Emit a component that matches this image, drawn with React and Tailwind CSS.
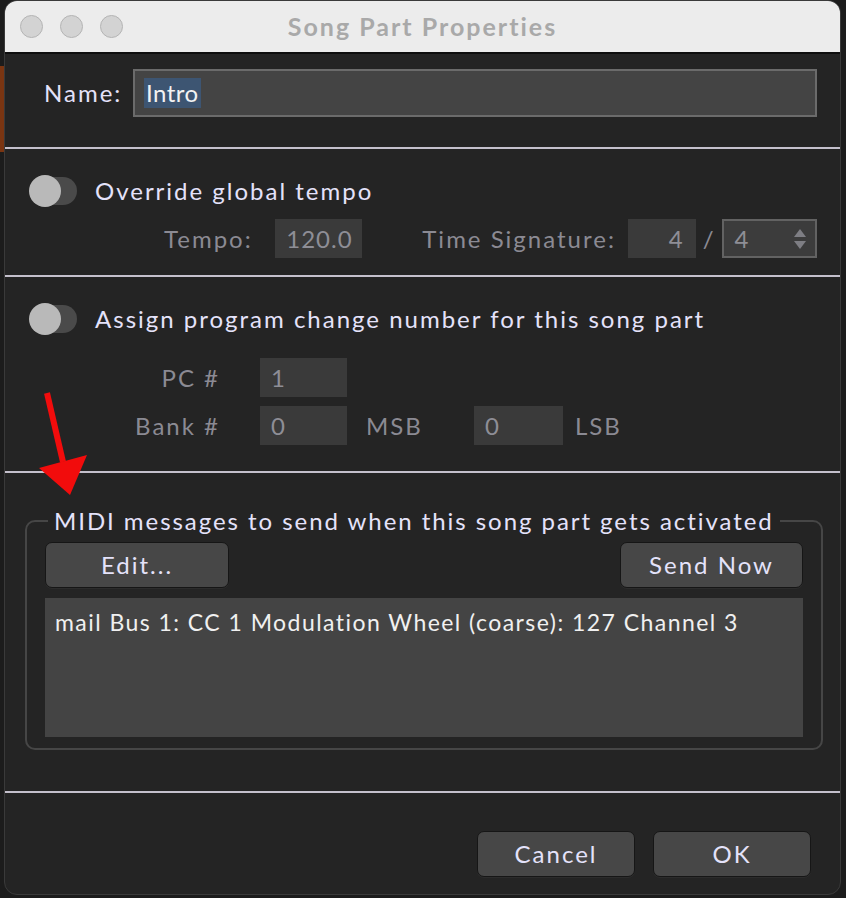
import React from 'react';

const font = { fontFamily: '"Lato", "Open Sans", sans-serif' };

function Toggle() {
  return (
    <div className="relative w-[48px] h-[32px] flex-shrink-0">
      <div className="absolute left-[8px] right-0 top-[2px] h-[28px] rounded-full bg-[#4a4a4a]" />
      <div className="absolute left-0 top-0 w-[32px] h-[32px] rounded-full bg-[#b9b9b9]" />
    </div>
  );
}

function Box({ children, className = '' }) {
  return (
    <div className={`h-[39px] bg-[#3a3a3a] text-[#8e8e96] flex items-center px-[11px] ${className}`}>
      {children}
    </div>
  );
}

function Btn({ children, className = '' }) {
  return (
    <div className={`h-[46px] rounded-[7px] bg-[#474747] border border-[#161616] shadow-[0_1px_0_#2c2c2c] flex items-center justify-center text-[#e4e2fa] text-[24px] tracking-[2px] ${className}`}>
      {children}
    </div>
  );
}

function Sep() {
  return <div className="h-[2px] bg-[#c4c0cc]" />;
}

export default function App() {
  return (
    <div className="w-[846px] h-[898px] bg-[#1c1c1c] relative overflow-hidden" style={font}>
      {/* stuff peeking behind the window */}
      <div className="absolute left-0 top-[66px] w-[5px] h-[86px] bg-[#7a3512]" />

      <div className="absolute left-[4px] top-0 w-[837px] h-[895px] rounded-[13px] overflow-hidden border border-[#3a3a3a] bg-[#242424] flex flex-col">
        {/* title bar */}
        <div className="h-[53px] bg-[#ececec] border-b-2 border-[#0e0e0e] relative flex items-center justify-center flex-shrink-0">
          <div className="absolute left-[15px] top-[14px] flex gap-[17px]">
            <div className="w-[23px] h-[23px] rounded-full bg-[#d3d3d3] border border-[#b4b4b4]" />
            <div className="w-[23px] h-[23px] rounded-full bg-[#d3d3d3] border border-[#b4b4b4]" />
            <div className="w-[23px] h-[23px] rounded-full bg-[#d3d3d3] border border-[#b4b4b4]" />
          </div>
          <span className="text-[25px] font-bold text-[#a9a9a9] tracking-[2px]">Song Part Properties</span>
        </div>

        {/* name */}
        <div className="flex items-center pl-[39px] pr-[23px] pt-[15px] pb-[30px] text-[24px] tracking-[2px]">
          <span className="text-[#e4e2fa] w-[89px]">Name:</span>
          <div className="flex-1 h-[48px] bg-[#444444] border-2 border-[#6b6b6b] flex items-center pl-[9px]">
            <span className="text-[#f2f2f2] bg-[#3d5572] px-[2px] leading-[30px] tracking-[0.5px]">Intro</span>
          </div>
        </div>
        <Sep />

        {/* tempo */}
        <div className="h-[126px] pl-[24px] pr-[23px] pt-[26px] text-[24px] tracking-[2px]">
          <div className="flex items-center gap-[18px]">
            <Toggle />
            <span className="text-[#e4e2fa] leading-[32px]">Override global tempo</span>
          </div>
          <div className="flex items-center mt-[12px]">
            <span className="text-[#8b8a93] ml-[135px] w-[112px]">Tempo:</span>
            <Box className="w-[87px] tracking-[1px]">120.0</Box>
            <span className="text-[#8b8a93] ml-[60px] w-[207px] tracking-[2px]">Time Signature:</span>
            <Box className="w-[68px] justify-end">4</Box>
            <span className="text-[#8b8a93] mx-[7px]">/</span>
            <div className="w-[95px] h-[39px] bg-[#3c3c3c] border-2 border-[#626262] text-[#8e8e96] flex items-center pl-[10px] pr-[8px] justify-between">
              <span>4</span>
              <svg width="14" height="24" viewBox="0 0 14 24">
                <path d="M7 2 L13 10 L1 10 Z" fill="#7e7e84" />
                <path d="M7 22 L13 14 L1 14 Z" fill="#7e7e84" />
              </svg>
            </div>
          </div>
        </div>
        <Sep />

        {/* program change */}
        <div className="h-[194px] pl-[24px] pr-[23px] pt-[26px] text-[24px] tracking-[2px]">
          <div className="flex items-center gap-[18px]">
            <Toggle />
            <span className="text-[#e4e2fa] leading-[32px]">Assign program change number for this song part</span>
          </div>
          <div className="grid grid-cols-[231px_87px_auto] mt-[23px] gap-y-[9px] items-center">
            <span className="text-[#8b8a93] text-right pr-[40px]">PC #</span>
            <Box>1</Box>
            <span />
            <span className="text-[#8b8a93] text-right pr-[40px]">Bank #</span>
            <Box>0</Box>
            <div className="flex items-center">
              <span className="text-[#8b8a93] ml-[19px] w-[108px]">MSB</span>
              <Box className="w-[89px]">0</Box>
              <span className="text-[#8b8a93] ml-[12px]">LSB</span>
            </div>
          </div>
        </div>
        <Sep />

        {/* midi messages */}
        <div className="h-[318px] pl-[20px] pr-[17px] pt-[33px]">
          <fieldset className="border-2 border-[#464646] rounded-[10px] px-[18px] pb-[11px] pt-[6px]">
            <legend className="ml-[3px] px-[6px] text-[24px] tracking-[1.95px] text-[#e4e2fa] leading-[30px]">
              MIDI messages to send when this song part gets activated
            </legend>
            <div className="flex justify-between">
              <Btn className="w-[184px]">Edit...</Btn>
              <Btn className="w-[183px]">Send Now</Btn>
            </div>
            <div className="mt-[10px] h-[139px] bg-[#444444] px-[10px] pt-[7px] text-[23px] tracking-[1.45px] text-[#f0f0f0]">
              mail Bus 1: CC 1 Modulation Wheel (coarse): 127 Channel 3
            </div>
          </fieldset>
        </div>
        <Sep />

        {/* footer */}
        <div className="flex justify-end gap-[18px] pr-[29px] pt-[38px]">
          <Btn className="w-[158px]">Cancel</Btn>
          <Btn className="w-[158px]">OK</Btn>
        </div>
      </div>

      {/* red annotation arrow */}
      <svg className="absolute left-0 top-0 pointer-events-none" width="846" height="898">
        <line x1="47" y1="393" x2="63" y2="462" stroke="#f20c0c" strokeWidth="6" />
        <path d="M39 468 L87 455 L70 495 Z" fill="#f20c0c" />
      </svg>
    </div>
  );
}
